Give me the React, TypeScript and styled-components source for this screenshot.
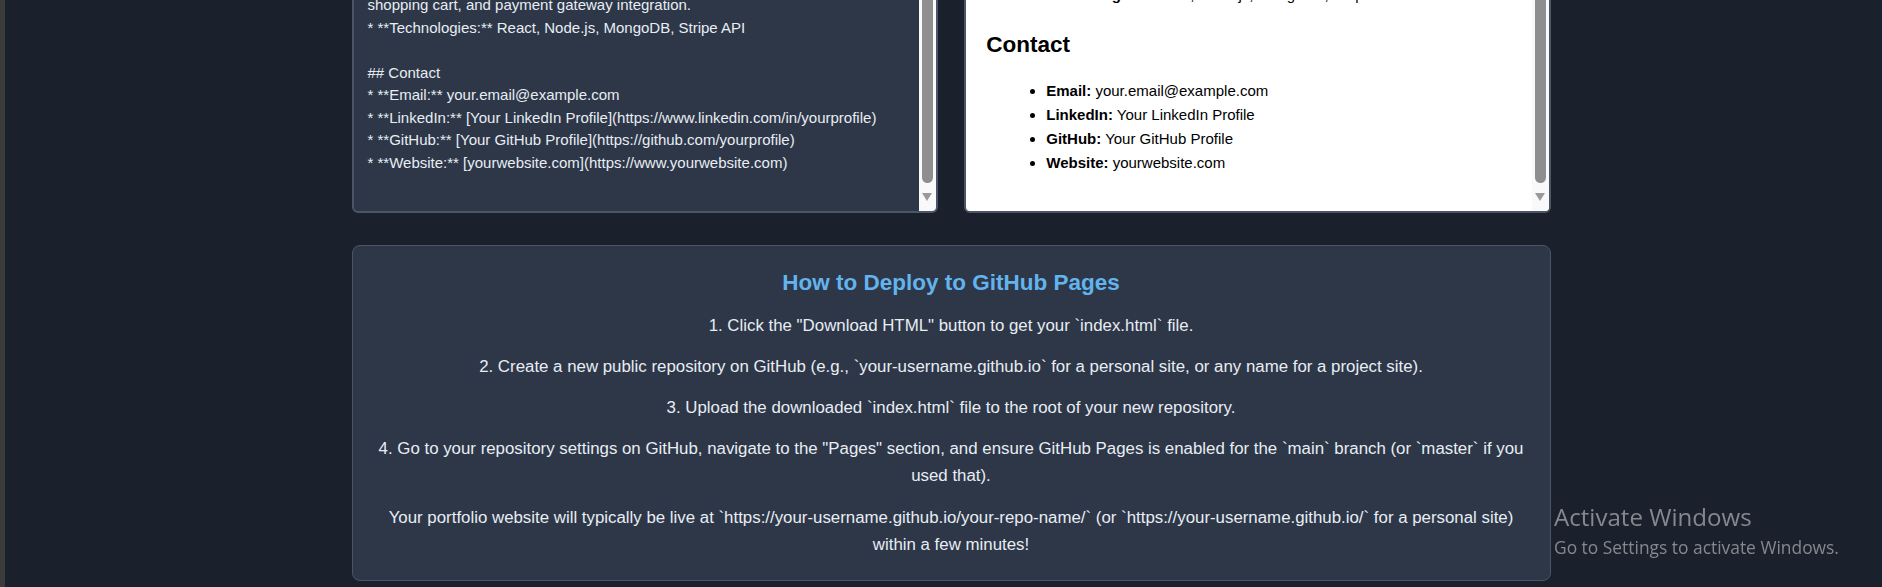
import React from 'react';
import styled, { createGlobalStyle } from 'styled-components';

const GlobalStyle = createGlobalStyle`
  html, body {
    margin: 0;
    padding: 0;
    background: #1a202c;
  }
  body {
    font-family: "Liberation Sans", Arial, sans-serif;
    overflow: hidden;
  }
`;

const Page = styled.div`
  display: flex;
  height: 587px;
  background: #1a202c;
  overflow: hidden;
`;

const WindowEdge = styled.div`
  width: 5px;
  flex: none;
  background: #3b3b3b;
`;

const Main = styled.main`
  flex: 1;
  padding-left: 346.5px;
`;

const Container = styled.div`
  width: 1199px;
  margin-top: -87.5px;
  display: flex;
  flex-direction: column;
  gap: 32.5px;
`;

const EditorRow = styled.div`
  display: grid;
  grid-template-columns: 1fr 1fr;
  gap: 26.5px;
  height: 300px;
`;

const Panel = styled.div<{ $light?: boolean }>`
  display: flex;
  min-width: 0;
  border: 2px solid #4a5568;
  border-radius: 6px;
  background: ${(p) => (p.$light ? '#ffffff' : '#2d3748')};
  overflow: hidden;
`;

const EditorText = styled.div`
  flex: 1;
  min-width: 0;
  overflow: hidden;
  display: flex;
  flex-direction: column;
  justify-content: flex-end;
  padding: 14px;
  color: #e8edf3;
  font-size: 15px;
  line-height: 22.5px;
`;

const EditorSource = styled.div`
  white-space: pre-wrap;
`;

const PreviewContent = styled.div`
  flex: 1;
  min-width: 0;
  overflow: hidden;
  display: flex;
  flex-direction: column;
  justify-content: flex-end;
  padding: 0 20px 21px;
  color: #000000;
  font-size: 15px;
  line-height: 24px;
`;

const PreviewBody = styled.div``;

const PreviewH2 = styled.h2`
  font-size: 22.5px;
  line-height: 27px;
  font-weight: 700;
  margin: 24px 0 20.5px;
`;

const PreviewH3 = styled.h3`
  font-size: 18px;
  line-height: 24px;
  font-weight: 700;
  margin: 16px 0 10px;
`;

const PreviewList = styled.ul`
  margin: 20.5px 0 15px;
  padding-left: 60px;
  list-style: disc;
`;

const PreviewItem = styled.li`
  margin: 0;
`;

const ScrollTrack = styled.div`
  width: 17px;
  flex: none;
  display: flex;
  flex-direction: column;
  background: #f9f9f9;
`;

const ScrollThumb = styled.div`
  flex: 1;
  margin: 0 3px;
  border-radius: 6px;
  background: #8e8e8e;
`;

const ScrollArrow = styled.div`
  height: 28px;
  display: flex;
  align-items: center;
  justify-content: center;
  padding-top: 1px;
  box-sizing: border-box;

  &::before {
    content: '';
    width: 0;
    height: 0;
    border-left: 5.5px solid transparent;
    border-right: 5.5px solid transparent;
    border-top: 8px solid #9a9a9a;
  }
`;

const DeployBox = styled.section`
  background: #2d3748;
  border: 1px solid #4a5568;
  border-radius: 8px;
  padding: 22.5px 20px 8.5px;
  text-align: center;
  color: #e8edf3;
`;

const DeployTitle = styled.h3`
  margin: 0 0 16.5px;
  font-size: 22.5px;
  line-height: 27px;
  font-weight: 700;
  color: #63b3ed;
`;

const DeployStep = styled.p`
  margin: 13.9px 0;
  font-size: 16.85px;
  line-height: 27.2px;
`;

const Watermark = styled.div`
  position: fixed;
  left: 1554px;
  top: 503px;
  display: flex;
  flex-direction: column;
  font-family: "Open Sans", "Noto Sans", sans-serif;
  color: #85888e;
  pointer-events: none;
`;

const WatermarkTitle = styled.div`
  font-size: 24.1px;
  line-height: 28.5px;
`;

const WatermarkHint = styled.div`
  font-size: 17.4px;
  line-height: 22px;
  margin-top: 4px;
`;

const markdown = `## Projects

### E-commerce Platform
* **Description:** Built a full online store with user accounts,
shopping cart, and payment gateway integration.
* **Technologies:** React, Node.js, MongoDB, Stripe API

## Contact
* **Email:** your.email@example.com
* **LinkedIn:** [Your LinkedIn Profile](https://www.linkedin.com/in/yourprofile)
* **GitHub:** [Your GitHub Profile](https://github.com/yourprofile)
* **Website:** [yourwebsite.com](https://www.yourwebsite.com)
\u00a0`;

const contacts = [
  { label: 'Email:', value: 'your.email@example.com' },
  { label: 'LinkedIn:', value: 'Your LinkedIn Profile' },
  { label: 'GitHub:', value: 'Your GitHub Profile' },
  { label: 'Website:', value: 'yourwebsite.com' },
];

const steps = [
  '1. Click the "Download HTML" button to get your `index.html` file.',
  '2. Create a new public repository on GitHub (e.g., `your-username.github.io` for a personal site, or any name for a project site).',
  '3. Upload the downloaded `index.html` file to the root of your new repository.',
  '4. Go to your repository settings on GitHub, navigate to the "Pages" section, and ensure GitHub Pages is enabled for the `main` branch (or `master` if you used that).',
  'Your portfolio website will typically be live at `https://your-username.github.io/your-repo-name/` (or `https://your-username.github.io/` for a personal site) within a few minutes!',
];

const Scrollbar = () => (
  <ScrollTrack>
    <ScrollThumb />
    <ScrollArrow />
  </ScrollTrack>
);

export default function App() {
  return (
    <>
      <GlobalStyle />
      <Page>
        <WindowEdge />
        <Main>
          <Container>
            <EditorRow>
              <Panel>
                <EditorText>
                  <EditorSource>{markdown}</EditorSource>
                </EditorText>
                <Scrollbar />
              </Panel>
              <Panel $light>
                <PreviewContent>
                  <PreviewBody>
                    <PreviewH2>Projects</PreviewH2>
                    <PreviewH3>E-commerce Platform</PreviewH3>
                    <PreviewList>
                      <PreviewItem>
                        <strong>Description:</strong> Built a full-featured online store.
                      </PreviewItem>
                      <PreviewItem>
                        <strong>Technologies:</strong> React, Node.js, MongoDB, Stripe API
                      </PreviewItem>
                    </PreviewList>
                    <PreviewH2>Contact</PreviewH2>
                    <PreviewList>
                      {contacts.map((c) => (
                        <PreviewItem key={c.label}>
                          <strong>{c.label}</strong> {c.value}
                        </PreviewItem>
                      ))}
                    </PreviewList>
                  </PreviewBody>
                </PreviewContent>
                <Scrollbar />
              </Panel>
            </EditorRow>
            <DeployBox>
              <DeployTitle>How to Deploy to GitHub Pages</DeployTitle>
              {steps.map((s) => (
                <DeployStep key={s}>{s}</DeployStep>
              ))}
            </DeployBox>
          </Container>
        </Main>
        <Watermark>
          <WatermarkTitle>Activate Windows</WatermarkTitle>
          <WatermarkHint>Go to Settings to activate Windows.</WatermarkHint>
        </Watermark>
      </Page>
    </>
  );
}
